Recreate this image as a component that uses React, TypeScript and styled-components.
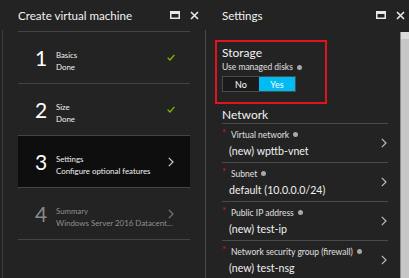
import React from 'react'
import styled, { createGlobalStyle } from 'styled-components'

const GlobalStyle = createGlobalStyle`
  html, body {
    margin: 0;
    padding: 0;
    background: #232323;
  }
  body {
    font-family: Lato, 'Noto Sans', sans-serif;
    color: #fff;
  }
`

const Screen = styled.div`
  display: flex;
  width: 409px;
  height: 278px;
  overflow: hidden;
  background: #232323;
`

const Blade = styled.section<{ $width: number }>`
  display: flex;
  flex-direction: column;
  width: ${({ $width }) => $width}px;
  flex-shrink: 0;
  overflow: hidden;
`

const BladeHeader = styled.header<{ $pad: number; $padRight: number }>`
  display: flex;
  align-items: center;
  height: 30px;
  padding: 0 ${({ $padRight }) => $padRight}px 0 ${({ $pad }) => $pad}px;
`

const BladeTitle = styled.h1`
  flex: 1;
  margin: 0;
  font-size: 11.6px;
  font-weight: 400;
  color: #f2f2f2;
`

const HeaderIcons = styled.div`
  display: flex;
  align-items: center;
  gap: 10px;
`

const BladeBody = styled.div<{ $left?: boolean }>`
  flex: 1;
  display: flex;
  min-height: 0;
  border-left: 1px solid ${({ $left }) => ($left ? '#3c3c3c' : '#4a4a4a')};
  margin-left: ${({ $left }) => ($left ? 2 : 0)}px;
`

const StepList = styled.div`
  flex: 1;
  min-width: 0;
  margin: 1px 15px 0 15px;
  border-top: 1px solid #444;
`

const StepRow = styled.div<{ $active?: boolean }>`
  display: flex;
  align-items: center;
  height: 51px;
  border-bottom: 1px solid #444;
  background: ${({ $active }) => ($active ? '#0e0e0e' : 'transparent')};
`

const StepNumber = styled.div<{ $muted?: boolean }>`
  width: 21px;
  margin-left: 17px;
  font-size: 21px;
  line-height: 1;
  font-weight: 400;
  color: ${({ $muted }) => ($muted ? '#8a8a8a' : '#fff')};
`

const StepText = styled.div<{ $muted?: boolean }>`
  flex: 1;
  min-width: 0;
  display: flex;
  flex-direction: column;
  gap: 2px;
  margin-top: 8px;
  color: ${({ $muted }) => ($muted ? '#8f8f8f' : '#f0f0f0')};
  white-space: nowrap;
`

const StepTitle = styled.span`
  font-size: 7.8px;
  line-height: 10px;
`

const StepSub = styled.span`
  font-size: 7.9px;
  line-height: 11px;
`

const StepMark = styled.div`
  width: 20px;
  display: flex;
  justify-content: center;
  margin-right: 9px;
`

const SettingsScroll = styled.div`
  flex: 1;
  min-width: 0;
  padding: 10px 12px 0 9px;
  overflow: hidden;
`

const Highlight = styled.div`
  width: 98px;
  border: 2px solid #e2131b;
  padding: 3px 5px 10px 5px;
`

const SectionTitle = styled.h2`
  margin: 0;
  font-size: 12px;
  font-weight: 400;
  line-height: 16px;
  color: #f4f4f4;
`

const FieldLabel = styled.div`
  display: flex;
  align-items: center;
  gap: 3px;
  font-size: 8.5px;
  line-height: 12px;
  color: #e0e0e0;
  white-space: nowrap;
`

const InfoDot = styled.span`
  display: inline-block;
  width: 5px;
  height: 5px;
  border-radius: 50%;
  background: #a8a8a8;
  margin-left: 1px;
`

const Toggle = styled.div`
  display: flex;
  margin-top: 3px;
  width: 72px;
  height: 14px;
  border: 1px solid #4a4a4a;
`

const ToggleOption = styled.div<{ $on?: boolean }>`
  flex: 1;
  display: flex;
  align-items: center;
  justify-content: center;
  font-size: 9px;
  color: #fff;
  background: ${({ $on }) => ($on ? '#00bcf2' : '#1a1a1a')};
`

const NetworkHead = styled.div`
  margin: 3px 0 0 7px;
  border-bottom: 1px solid #4a4a4a;
`

const FieldRow = styled.div`
  display: flex;
  align-items: center;
  height: 38px;
  margin-left: 7px;
  padding-right: 1px;
  border-bottom: 1px solid #4a4a4a;
`

const FieldText = styled.div`
  flex: 1;
  min-width: 0;
  display: flex;
  flex-direction: column;
  gap: 4px;
`

const Required = styled.span`
  color: #e81123;
  font-size: 9px;
  width: 6px;
  line-height: 8px;
  align-self: flex-start;
`

const FieldValue = styled.div`
  padding-left: 7px;
  font-size: 10.6px;
  line-height: 13px;
  color: #f0f0f0;
`

const Scrollbar = styled.div`
  width: 8px;
  margin-top: 2px;
  background: #c6c6c6;
  border-left: 1px solid #8c8c8c;
  display: flex;
  flex-direction: column;
`

const ScrollArrow = styled.div`
  height: 7px;
  background: #dcdcdc;
`

const MaximizeIcon = () => (
  <svg width="10" height="8" viewBox="0 0 10 8">
    <rect x="0.75" y="0.75" width="8.5" height="6.5" fill="none" stroke="#e8e8e8" strokeWidth="1.5" />
    <rect x="0" y="0" width="10" height="3" fill="#e8e8e8" />
  </svg>
)

const CloseIcon = () => (
  <svg width="9" height="9" viewBox="0 0 9 9">
    <path d="M1 1 L8 8 M8 1 L1 8" stroke="#e8e8e8" strokeWidth="1.6" />
  </svg>
)

const CheckIcon = () => (
  <svg width="8" height="7" viewBox="0 0 8 7">
    <path d="M0.6 3.6 L3 6 L7.4 0.8" fill="none" stroke="#7fba00" strokeWidth="1.3" />
  </svg>
)

const Chevron = ({ color = '#bdbdbd' }: { color?: string }) => (
  <svg width="6" height="10" viewBox="0 0 6 10">
    <path d="M0.8 0.8 L5 5 L0.8 9.2" fill="none" stroke={color} strokeWidth="1.2" />
  </svg>
)

const steps = [
  { n: '1', title: 'Basics', sub: 'Done', state: 'done' },
  { n: '2', title: 'Size', sub: 'Done', state: 'done' },
  { n: '3', title: 'Settings', sub: 'Configure optional features', state: 'active' },
  { n: '4', title: 'Summary', sub: 'Windows Server 2016 Datacent...', state: 'muted' },
]

const fields = [
  { label: 'Virtual network', value: '(new) wpttb-vnet' },
  { label: 'Subnet', value: 'default (10.0.0.0/24)' },
  { label: 'Public IP address', value: '(new) test-ip' },
  { label: 'Network security group (firewall)', value: '(new) test-nsg' },
]

export default function App() {
  return (
    <Screen>
      <GlobalStyle />
      <Blade $width={205}>
        <BladeHeader $pad={18} $padRight={6}>
          <BladeTitle>Create virtual machine</BladeTitle>
          <HeaderIcons>
            <MaximizeIcon />
            <CloseIcon />
          </HeaderIcons>
        </BladeHeader>
        <BladeBody $left>
          <StepList>
            {steps.map((s) => {
              const muted = s.state === 'muted'
              return (
                <StepRow key={s.n} $active={s.state === 'active'}>
                  <StepNumber $muted={muted}>{s.n}</StepNumber>
                  <StepText $muted={muted}>
                    <StepTitle>{s.title}</StepTitle>
                    <StepSub>{s.sub}</StepSub>
                  </StepText>
                  <StepMark>
                    {s.state === 'done' ? <CheckIcon /> : <Chevron color={muted ? '#777' : '#cfcfcf'} />}
                  </StepMark>
                </StepRow>
              )
            })}
          </StepList>
        </BladeBody>
      </Blade>
      <Blade $width={204}>
        <BladeHeader $pad={17} $padRight={4}>
          <BladeTitle>Settings</BladeTitle>
          <HeaderIcons>
            <MaximizeIcon />
            <CloseIcon />
          </HeaderIcons>
        </BladeHeader>
        <BladeBody>
          <SettingsScroll>
            <Highlight>
              <SectionTitle>Storage</SectionTitle>
              <FieldLabel>
                Use managed disks <InfoDot />
              </FieldLabel>
              <Toggle>
                <ToggleOption>No</ToggleOption>
                <ToggleOption $on>Yes</ToggleOption>
              </Toggle>
            </Highlight>
            <NetworkHead>
              <SectionTitle>Network</SectionTitle>
            </NetworkHead>
            {fields.map((f) => (
              <FieldRow key={f.label}>
                <FieldText>
                  <FieldLabel>
                    <Required>*</Required>
                    {f.label} <InfoDot />
                  </FieldLabel>
                  <FieldValue>{f.value}</FieldValue>
                </FieldText>
                <Chevron />
              </FieldRow>
            ))}
          </SettingsScroll>
          <Scrollbar>
            <ScrollArrow />
          </Scrollbar>
        </BladeBody>
      </Blade>
    </Screen>
  )
}
